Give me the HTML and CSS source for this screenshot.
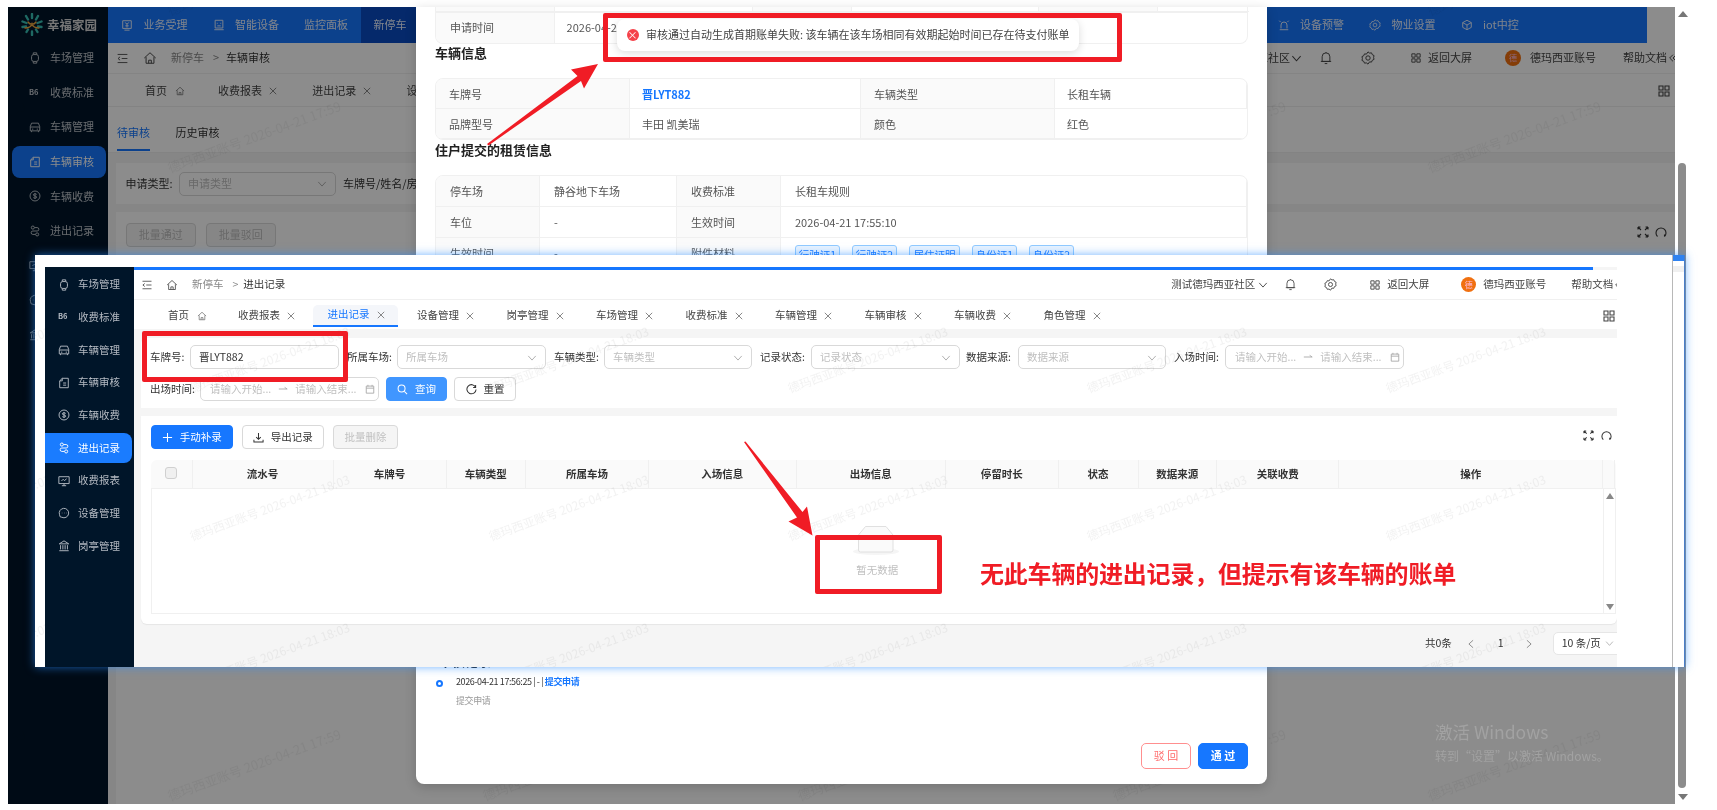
FILE: index.html
```html
<!DOCTYPE html>
<html lang="zh-CN">
<head>
<meta charset="utf-8">
<title>进出记录</title>
<link rel="stylesheet" href="styles.css">
</head>
<body>
<svg class="defs" width="0" height="0" aria-hidden="true">
  <symbol id="i-fold" viewBox="0 0 16 16"><path d="M2 3h12M7 8h7M2 13h12M5 6 2.5 8 5 10"/></symbol>
  <symbol id="i-home" viewBox="0 0 16 16"><path d="M1.5 8 8 2l6.500 6M3.500 7v7h9V7M6.500 14v-3.500h3V14"/></symbol>
  <symbol id="i-x" viewBox="0 0 10 10"><path d="m1 1 8 8M9 1 1 9"/></symbol>
  <symbol id="i-chev" viewBox="0 0 12 12"><path d="m1.500 3.500 4.500 5 4.500-5"/></symbol>
  <symbol id="i-bell" viewBox="0 0 14 16"><path d="M2.500 12V6.500a4.500 4.500 0 0 1 9 0V12zM1 12h12M5.500 14.500h3M7 2V1"/></symbol>
  <symbol id="i-gear" viewBox="0 0 16 16"><path d="m8 1 1.800 1.400 2.200-.3.900 2.100 2 1-.5 2.200.5 2.200-2 1-.9 2.100-2.200-.3L8 15l-1.800-1.400-2.200.3-.9-2.100-2-1 .5-2.200-.5-2.200 2-1 .9-2.100 2.200.3z"/><circle cx="8" cy="8" r="2.500"/></symbol>
  <symbol id="i-grid" viewBox="0 0 12 12"><path d="M1 1h4v4H1zM7 1h4v4H7zM1 7h4v4H1zM7 7h4v4H7z"/></symbol>
  <symbol id="i-expand" viewBox="0 0 12 12"><path d="M1 1l3 3M1 1v2.500M1 1h2.500M11 1 8 4M11 1v2.500M11 1H8.500M1 11l3-3M1 11V8.500M1 11h2.500M11 11 8 8M11 11V8.500M11 11H8.500"/></symbol>
  <symbol id="i-reload" viewBox="0 0 12 12"><path d="M2.500 10.500A5 5 0 1 1 9.500 10.500M9.500 10.500V8.500"/></symbol>
  <symbol id="i-search" viewBox="0 0 12 12"><circle cx="5" cy="5" r="3.800"/><path d="m8 8 3 3"/></symbol>
  <symbol id="i-redo" viewBox="0 0 12 12"><path d="M10.500 3.500A5 5 0 1 0 11 6M10.500 1v2.800H7.800"/></symbol>
  <symbol id="i-plus" viewBox="0 0 12 12"><path d="M6 1v10M1 6h10"/></symbol>
  <symbol id="i-down" viewBox="0 0 12 12"><path d="M6 1v7M3.500 5.500 6 8l2.500-2.500M1 8.500V11h10V8.500"/></symbol>
  <symbol id="i-cal" viewBox="0 0 12 12"><path d="M1.500 2.500h9v8.500h-9zM1.500 5h9M3.500 1v2M8.500 1v2"/></symbol>
  <symbol id="i-arrow" viewBox="0 0 12 8"><path d="M1 4h10M8 2l3 2"/></symbol>
  <symbol id="i-watch" viewBox="0 0 12 14"><rect x="2" y="3" width="8" height="8" rx="2.500"/><path d="M4 3V1h4v2M4 11v2h4v-2"/></symbol>
  <symbol id="i-car" viewBox="0 0 14 14"><path d="M3 2.500h8l1.500 4v5h-11v-5zM1.500 7h11M3.500 9.500h1.500M9 9.500h1.500M3 11.500v1.500M11 11.500v1.500"/></symbol>
  <symbol id="i-doc" viewBox="0 0 14 14"><path d="M5 1.500h7v11H2v-8zM5 1.500v3H2M6 7h3.500M6 9.500h3.500"/></symbol>
  <symbol id="i-coin" viewBox="0 0 14 14"><circle cx="7" cy="7" r="5.800"/><path d="M9 5.200C8.500 4.200 5 4 5 5.700 5 7.400 9 6.500 9 8.300 9 10 5.500 9.800 5 8.800M7 3.500v7"/></symbol>
  <symbol id="i-route" viewBox="0 0 14 14"><circle cx="4.500" cy="3" r="1.800"/><circle cx="9.500" cy="11" r="1.800"/><path d="M6.500 3h3a2 2 0 0 1 0 4h-5a2 2 0 0 0 0 4h3"/></symbol>
  <symbol id="i-screen" viewBox="0 0 14 14"><path d="M1 2h12v8H1zM4.500 12.500h5M7 10v2.500M4 7l2-2 1.500 1.500L10 4.500"/></symbol>
  <symbol id="i-clock" viewBox="0 0 14 14"><path d="M2.500 11.500 1.800 9A5.500 5.500 0 1 1 4.500 12z"/><path d="M4.500 7h.5M7 7h.5M9.500 7h.5"/></symbol>
  <symbol id="i-bank" viewBox="0 0 14 14"><path d="M7 1 1.500 4.500h11zM3 6v5M5.700 6v5M8.300 6v5M11 6v5M1.500 12.500h11"/></symbol>
  <symbol id="i-tv" viewBox="0 0 14 14"><path d="M2 2h10v9H2zM4 13h6M5 4l1 1.500h2L9 4M5 8h4M7 5.500V10"/></symbol>
  <symbol id="i-face" viewBox="0 0 14 14"><path d="M2.500 1.500h9v9h-9zM1.500 12.500h11M5 4.500v1M9 4.500v1M5 8h4"/></symbol>
  <symbol id="i-alarm" viewBox="0 0 14 14"><path d="M3.500 11V7a3.500 3.500 0 0 1 7 0v4M2 12.500h10M1.500 2l1.500 1.500M12.500 2 11 3.500"/></symbol>
  <symbol id="i-cube" viewBox="0 0 14 14"><path d="M7 1.500 12 4.200v5.600L7 12.500 2 9.800V4.200zM2 4.200 7 7l5-2.800M7 7v5.500"/></symbol>
  <symbol id="i-more" viewBox="0 0 12 12"><path d="M6 2 2 6l4 4M10 2 6 6l4 4"/></symbol>
</svg>

<main class="canvas">

  <section class="base">
    <aside class="side">
      <div class="logo">
        <svg class="logo-mark" viewBox="0 0 22 23"><path class="logo-teal" d="M11 1v4M5 3l2 3.500M17 3l-2 3.500M1.500 8.500 5.500 10M20.500 8.500 16.500 10M1.500 14l3.500-.5M20.500 14l-3.500-.5M11 18.500V22M5.500 19l1.500-2.500M16.500 19 15 16.500"/><path class="logo-orange" d="M7 9c2 3 6 3 8 0M4 15c3 0 6-1 7-4 1 3 4 4 7 4"/></svg>
        <span>幸福家园</span>
      </div>
      <a class="side-item"><svg class="ic"><use href="#i-watch"/></svg>车场管理</a>
      <a class="side-item"><b class="b6">B6</b>收费标准</a>
      <a class="side-item"><svg class="ic"><use href="#i-car"/></svg>车辆管理</a>
      <a class="side-item is-on"><svg class="ic"><use href="#i-doc"/></svg>车辆审核</a>
      <a class="side-item"><svg class="ic"><use href="#i-coin"/></svg>车辆收费</a>
      <a class="side-item"><svg class="ic"><use href="#i-route"/></svg>进出记录</a>
      <a class="side-item"><svg class="ic"><use href="#i-screen"/></svg>收费报表</a>
      <a class="side-item"><svg class="ic"><use href="#i-clock"/></svg>设备管理</a>
      <a class="side-item"><svg class="ic"><use href="#i-bank"/></svg>岗亭管理</a>
    </aside>
    <div class="main">
      <nav class="topnav">
        <a class="nav-item"><svg class="ic"><use href="#i-tv"/></svg>业务受理</a>
        <a class="nav-item"><svg class="ic"><use href="#i-face"/></svg>智能设备</a>
        <a class="nav-item">监控面板</a>
        <a class="nav-item is-on">新停车</a>
        <a class="nav-item nav-far"><svg class="ic"><use href="#i-alarm"/></svg>设备预警</a>
        <a class="nav-item"><svg class="ic"><use href="#i-gear"/></svg>物业设置</a>
        <a class="nav-item"><svg class="ic"><use href="#i-cube"/></svg>iot中控</a>
      </nav>
      <header class="hd">
        <svg class="ic hd-fold"><use href="#i-fold"/></svg>
        <svg class="ic hd-home"><use href="#i-home"/></svg>
        <span class="crumb">新停车</span><span class="crumb-sep">&gt;</span><span class="crumb-now">车辆审核</span>
        <span class="hd-org">测试德玛西亚社区</span>
        <svg class="ic hd-chev"><use href="#i-chev"/></svg>
        <svg class="ic hd-bell"><use href="#i-bell"/></svg>
        <svg class="ic hd-gear"><use href="#i-gear"/></svg>
        <svg class="ic hd-grid"><use href="#i-grid"/></svg>
        <span class="hd-back">返回大屏</span>
        <span class="hd-avatar">德</span>
        <span class="hd-user">德玛西亚账号</span>
        <span class="hd-help">帮助文档</span>
        <svg class="ic hd-more"><use href="#i-more"/></svg>
      </header>
      <div class="tabs">
        <a class="tab tab-first">首页<svg class="ic tab-ic"><use href="#i-home"/></svg></a>
        <a class="tab">收费报表<svg class="ic tab-x"><use href="#i-x"/></svg></a>
        <a class="tab">进出记录<svg class="ic tab-x"><use href="#i-x"/></svg></a>
        <a class="tab">设备管理<svg class="ic tab-x"><use href="#i-x"/></svg></a>
        <svg class="ic tabs-grid"><use href="#i-grid"/></svg>
      </div>
      <div class="audit">
        <div class="audit-tabs"><a class="audit-tab is-on">待审核</a><a class="audit-tab">历史审核</a></div>
        <div class="audit-filter">
          <label class="lbl lbl-apply">申请类型:</label>
          <span class="field field-apply">申请类型<svg class="ic field-chev"><use href="#i-chev"/></svg></span>
          <label class="lbl lbl-plate">车牌号/姓名/房号:</label>
        </div>
        <div class="audit-card">
          <div class="audit-btns"><button class="btn btn-off">批量通过</button><button class="btn btn-off">批量驳回</button><span class="tools"><svg class="ic"><use href="#i-expand"/></svg><svg class="ic"><use href="#i-reload"/></svg></span></div>
        </div>
      </div>
    </div>
    <svg class="wm" aria-hidden="true"><defs><pattern id="wm-a" width="315" height="157" patternUnits="userSpaceOnUse" patternTransform="translate(152 56)"><text x="10" y="110" transform="rotate(-20 10 110)" class="wm-text wm-a">德玛西亚账号 2026-04-21 17:59</text></pattern></defs><rect width="100%" height="100%" fill="url(#wm-a)"/></svg>
    <div class="mask"></div>
  </section>

  <section class="modal">
    <div class="dt dt-1 dt-frag"><i class="c k"></i><i class="c"></i><i class="c k"></i><i class="c"></i><i class="c k"></i><i class="c"></i></div>
    <div class="dt dt-wide dt-end"><div class="c k">申请时间</div><div class="c c-val">2026-04-2</div></div>
    <h3 class="sec sec-1">车辆信息</h3>
    <div class="dt dt-2 dt-box">
      <div class="c k">车牌号</div><div class="c c-val plate">晋LYT882</div><div class="c k">车辆类型</div><div class="c c-val">长租车辆</div>
      <div class="c k">品牌型号</div><div class="c c-val">丰田 凯美瑞</div><div class="c k">颜色</div><div class="c c-val">红色</div>
    </div>
    <h3 class="sec sec-2">住户提交的租赁信息</h3>
    <div class="dt dt-3 dt-box">
      <div class="c k">停车场</div><div class="c">静谷地下车场</div><div class="c k">收费标准</div><div class="c">长租车规则</div>
      <div class="c k">车位</div><div class="c">-</div><div class="c k">生效时间</div><div class="c">2026-04-21 17:55:10</div>
      <div class="c k">生效时间</div><div class="c">-</div><div class="c k">附件材料</div><div class="c c-tags"><span class="att">行驶证1</span><span class="att">行驶证2</span><span class="att att-w">居住证明</span><span class="att">身份证1</span><span class="att">身份证2</span></div>
    </div>
    <h3 class="tl-head">审核记录</h3>
    <div class="tl">
      <span class="tl-dot"></span>
      <div class="tl-body">
        <p class="tl-line">2026-04-21 17:56:25 | - | <a class="tl-link">提交申请</a></p>
        <p class="tl-note">提交申请</p>
      </div>
    </div>
    <div class="modal-foot"><button class="mbtn mbtn-no">驳 回</button><button class="mbtn mbtn-ok">通 过</button></div>
  </section>

  <div class="sbar"><span class="sbar-up"></span><span class="sbar-thumb"></span><span class="sbar-down"></span></div>

  <div class="winmark"><p class="winmark-a">激活 Windows</p><p class="winmark-b">转到“设置”以激活 Windows。</p></div>

  <div class="toast"><span class="toast-ic">×</span>审核通过自动生成首期账单失败: 该车辆在该车场相同有效期起始时间已存在待支付账单</div>

  <section class="shot">
    <aside class="s-side">
      <a class="s-item"><svg class="ic"><use href="#i-watch"/></svg>车场管理</a>
      <a class="s-item"><b class="b6">B6</b>收费标准</a>
      <a class="s-item"><svg class="ic"><use href="#i-car"/></svg>车辆管理</a>
      <a class="s-item"><svg class="ic"><use href="#i-doc"/></svg>车辆审核</a>
      <a class="s-item"><svg class="ic"><use href="#i-coin"/></svg>车辆收费</a>
      <a class="s-item is-on"><svg class="ic"><use href="#i-route"/></svg>进出记录</a>
      <a class="s-item"><svg class="ic"><use href="#i-screen"/></svg>收费报表</a>
      <a class="s-item"><svg class="ic"><use href="#i-clock"/></svg>设备管理</a>
      <a class="s-item"><svg class="ic"><use href="#i-bank"/></svg>岗亭管理</a>
    </aside>
    <div class="s-main">
      <div class="s-line"></div>
      <header class="hd s-hd">
        <svg class="ic hd-fold"><use href="#i-fold"/></svg>
        <svg class="ic hd-home"><use href="#i-home"/></svg>
        <span class="crumb">新停车</span><span class="crumb-sep">&gt;</span><span class="crumb-now">进出记录</span>
        <span class="hd-org">测试德玛西亚社区</span>
        <svg class="ic hd-chev"><use href="#i-chev"/></svg>
        <svg class="ic hd-bell"><use href="#i-bell"/></svg>
        <svg class="ic hd-gear"><use href="#i-gear"/></svg>
        <svg class="ic hd-grid"><use href="#i-grid"/></svg>
        <span class="hd-back">返回大屏</span>
        <span class="hd-avatar">德</span>
        <span class="hd-user">德玛西亚账号</span>
        <span class="hd-help">帮助文档</span>
        <svg class="ic hd-more"><use href="#i-more"/></svg>
      </header>
      <div class="tabs s-tabs">
        <a class="tab tab-first">首页<svg class="ic tab-ic"><use href="#i-home"/></svg></a>
        <a class="tab">收费报表<svg class="ic tab-x"><use href="#i-x"/></svg></a>
        <a class="tab is-on">进出记录<svg class="ic tab-x"><use href="#i-x"/></svg></a>
        <a class="tab">设备管理<svg class="ic tab-x"><use href="#i-x"/></svg></a>
        <a class="tab">岗亭管理<svg class="ic tab-x"><use href="#i-x"/></svg></a>
        <a class="tab">车场管理<svg class="ic tab-x"><use href="#i-x"/></svg></a>
        <a class="tab">收费标准<svg class="ic tab-x"><use href="#i-x"/></svg></a>
        <a class="tab">车辆管理<svg class="ic tab-x"><use href="#i-x"/></svg></a>
        <a class="tab">车辆审核<svg class="ic tab-x"><use href="#i-x"/></svg></a>
        <a class="tab">车辆收费<svg class="ic tab-x"><use href="#i-x"/></svg></a>
        <a class="tab">角色管理<svg class="ic tab-x"><use href="#i-x"/></svg></a>
        <svg class="ic tabs-grid"><use href="#i-grid"/></svg>
      </div>
      <form class="filter">
        <div class="f-row">
          <label class="lbl l40">车牌号:</label><span class="field f149 is-val">晋LYT882</span>
          <label class="lbl l50 m8">所属车场:</label><span class="field f149">所属车场<svg class="ic field-chev"><use href="#i-chev"/></svg></span>
          <label class="lbl l50 m8">车辆类型:</label><span class="field f148">车辆类型<svg class="ic field-chev"><use href="#i-chev"/></svg></span>
          <label class="lbl l51 m8">记录状态:</label><span class="field f149">记录状态<svg class="ic field-chev"><use href="#i-chev"/></svg></span>
          <label class="lbl l52 m6">数据来源:</label><span class="field f148">数据来源<svg class="ic field-chev"><use href="#i-chev"/></svg></span>
          <label class="lbl l51 m8">入场时间:</label>
          <span class="field range f178"><span>请输入开始...</span><svg class="ic range-to"><use href="#i-arrow"/></svg><span>请输入结束...</span><svg class="ic range-cal"><use href="#i-cal"/></svg></span>
        </div>
        <div class="f-row">
          <label class="lbl l50">出场时间:</label>
          <span class="field range f179"><span>请输入开始...</span><svg class="ic range-to"><use href="#i-arrow"/></svg><span>请输入结束...</span><svg class="ic range-cal"><use href="#i-cal"/></svg></span>
          <button type="button" class="btn btn-pri btn-q"><svg class="ic"><use href="#i-search"/></svg>查询</button>
          <button type="button" class="btn btn-line btn-r"><svg class="ic"><use href="#i-redo"/></svg>重置</button>
        </div>
      </form>
      <div class="card">
        <div class="toolbar">
          <button class="btn btn-solid btn-add"><svg class="ic"><use href="#i-plus"/></svg>手动补录</button>
          <button class="btn btn-line btn-exp"><svg class="ic"><use href="#i-down"/></svg>导出记录</button>
          <button class="btn btn-dis btn-del">批量删除</button>
          <span class="tools"><svg class="ic"><use href="#i-expand"/></svg><svg class="ic"><use href="#i-reload"/></svg></span>
        </div>
        <div class="table">
          <div class="thead">
            <div class="th"><span class="check"></span></div>
            <div class="th">流水号</div><div class="th">车牌号</div><div class="th">车辆类型</div><div class="th">所属车场</div><div class="th">入场信息</div><div class="th">出场信息</div><div class="th">停留时长</div><div class="th">状态</div><div class="th">数据来源</div><div class="th">关联收费</div><div class="th">操作</div><div class="th"></div>
          </div>
          <div class="tbody">
            <div class="empty">
              <svg class="empty-ic" viewBox="0 0 48 29"><ellipse cx="23" cy="25.500" rx="23" ry="3.500" class="e-shadow"/><path d="M5.500 9 12.500.5H33L40 9v15a2 2 0 0 1-2 2H7.500a2 2 0 0 1-2-2z" class="e-box"/></svg>
              <span>暂无数据</span>
            </div>
            <div class="t-scroll"><span class="t-up"></span><span class="t-down"></span></div>
          </div>
        </div>
      </div>
      <div class="pager">
        <span class="pg-total">共0条</span>
        <svg class="ic pg-prev"><use href="#i-chev"/></svg>
        <span class="pg-num">1</span>
        <svg class="ic pg-next"><use href="#i-chev"/></svg>
        <span class="pg-size">10 条/页<svg class="ic"><use href="#i-chev"/></svg></span>
      </div>
    </div>
    <div class="s-edge"><span class="s-edge-top"></span></div>
    <svg class="wm" aria-hidden="true"><defs><pattern id="wm-b" width="299" height="148" patternUnits="userSpaceOnUse" patternTransform="translate(147 38)"><text x="10" y="100" transform="rotate(-20 10 100)" class="wm-text wm-b">德玛西亚账号 2026-04-21 18:03</text></pattern></defs><rect width="100%" height="100%" fill="url(#wm-b)"/></svg>
  </section>

  <svg class="marks" viewBox="0 0 1717 810" aria-hidden="true">
    <polygon points="598,64 571,69.500 577.500,76 487,144 488.500,145.500 581,81 584,88.500"/>
    <polygon points="812.500,535.500 788.500,521.500 797,517.500 744,442 745.500,441.500 802.500,512 807,506.500"/>
  </svg>
  <div class="rbox rbox-toast"></div>
  <div class="rbox rbox-plate"></div>
  <div class="rbox rbox-empty"></div>
  <p class="note">无此车辆的进出记录&#xFF0C;但提示有该车辆的账单</p>
</main>
</body>
</html>
```

FILE: styles.css
```css
* { box-sizing: border-box; }
html, body { margin: 0; padding: 0; background: #fff; }
body { width: 1717px; height: 810px; overflow: hidden; font: 11px/1.4 "Noto Sans CJK SC", "Noto Sans", sans-serif; color: #333; }
p, h3 { margin: 0; }
a { color: inherit; text-decoration: none; }
button { font: inherit; padding: 0; }
.defs { position: absolute; }
.ic { width: 12px; height: 12px; flex: none; fill: none; stroke: currentColor; stroke-width: 1.1; }
.canvas { position: relative; width: 1717px; height: 810px; overflow: hidden; filter: blur(.3px); }

/* ---- background application window ---- */
.base { position: absolute; left: 8px; top: 7px; width: 1667px; height: 797px; display: flex; overflow: hidden; background: #fff; }
.mask { position: absolute; inset: 0; background: rgba(0,0,0,.45); }
.wm { position: absolute; inset: 0; width: 100%; height: 100%; pointer-events: none; }
.wm-text { font-family: "Noto Sans CJK SC", sans-serif; fill: rgba(0,0,0,.05); }
.wm-a { font-size: 13px; }
.wm-b { font-size: 12px; }

.side { width: 100px; flex: none; background: #001529; color: #bcc2c8; }
.logo { height: 35px; display: flex; align-items: center; gap: 4px; padding-left: 13px; font-size: 12.500px; font-weight: 700; color: #d8d8d8; }
.logo-mark { width: 22px; height: 23px; fill: none; stroke-linecap: round; }
.logo-teal { stroke: #38c0b4; stroke-width: 2.400; }
.logo-orange { stroke: #f0aa40; stroke-width: 1.400; }
.side-item { display: flex; align-items: center; gap: 9px; height: 32px; margin: 0 2px 2.600px 4px; padding-left: 17px; border-radius: 8px; }
.side-item.is-on { background: #1677ff; color: #fff; }
.b6 { width: 12px; flex: none; font-size: 7.500px; font-weight: 700; }

.main { width: 1567px; flex: none; background: #fff; }
.topnav { width: 1539px; height: 36px; display: flex; align-items: center; background: #1677ff; color: #e8f0ff; padding-left: 13px; }
.nav-item { display: flex; align-items: center; gap: 10.500px; height: 36px; margin-right: 25px; }
.nav-item.is-on { background: #0a4cc4; padding: 0 10px 0 13px; margin-right: 0; margin-left: -12.500px; }
.nav-far { margin-left: 861px; }
.nav-far ~ .nav-item { margin-right: 25px; }

.hd { height: 31px; display: flex; align-items: center; overflow: hidden; white-space: nowrap; border-bottom: 1px solid #f0f0f0; color: #444; padding-left: 7.500px; }
.hd-fold { width: 13px; height: 13px; }
.hd-home { width: 14px; height: 14px; margin-left: 14px; }
.crumb { margin-left: 14.500px; color: #888; }
.crumb-sep { margin-left: 9px; color: #888; }
.crumb-now { margin-left: 7px; color: #333; }
.hd-org { margin-left: 932px; }
.hd-chev { width: 11px; height: 11px; margin-left: 1px; }
.hd-bell { width: 12px; height: 14px; margin-left: 18px; }
.hd-gear { width: 14px; height: 14px; margin-left: 29px; }
.hd-grid { width: 10px; height: 10px; margin-left: 36px; }
.hd-back { margin-left: 7px; }
.hd-avatar { width: 16px; height: 16px; margin-left: 33px; border-radius: 50%; background: #f07010; color: #fbd; font-size: 8px; line-height: 16px; text-align: center; flex: none; }
.hd-user { margin-left: 9px; }
.hd-help { margin-left: 27px; }
.hd-more { width: 10px; height: 10px; margin-left: 1px; }

.tabs { height: 33px; display: flex; align-items: center; color: #444; padding: 1px 5px 0 22px; white-space: nowrap; border-bottom: 1px solid #eee; background: #fff; }
.tab { display: flex; align-items: center; gap: 6px; width: 94.300px; height: 24px; padding-left: 15px; flex: none; }
.tab-first { width: 73px; }
.tab-ic { width: 10px; height: 10px; margin-left: 2px; color: #666; }
.tab-x { width: 8px; height: 8px; color: #777; margin-left: 1px; }
.tabs-grid { margin-left: auto; }
.base .tabs-grid { margin-right: 0; }

.audit { background: #f5f5f5; height: 700px; }
.audit-tabs { height: 46px; display: flex; align-items: flex-start; background: #fff; padding-left: 9px; border-bottom: 1px solid #eee; }
.audit-tab { margin-right: 25.500px; height: 44px; padding-top: 18px; }
.audit-tab.is-on { color: #1677ff; border-bottom: 2px solid #1677ff; }
.audit-filter { margin: 10px 0 8px 8px; height: 41px; background: #fff; display: flex; align-items: center; padding-left: 9.500px; white-space: nowrap; }
.lbl-apply { width: 53.500px; flex: none; }
.field-apply { width: 157px; margin-right: 7px; }
.audit-card { margin-left: 8px; height: 600px; background: #fff; padding: 10.500px 0 0 10px; }
.audit-btns { display: flex; align-items: center; gap: 10.500px; padding-right: 8px; }
.btn-off { width: 69.500px; height: 25px; border: 1px solid #d9d9d9; border-radius: 5px; background: #f5f5f5; color: #bbb; }
.tools { margin-left: auto; display: flex; align-items: center; gap: 6px; color: #333; }
.audit-btns .tools { gap: 6px; margin-top: -5px; }

/* ---- modal ---- */
.modal { position: absolute; left: 416px; top: 7px; width: 851px; height: 777px; background: #fff; border-radius: 0 0 8px 8px; padding: 0 19.400px 0 19px; color: #555; box-shadow: 0 3px 12px rgba(0,0,0,.18); }
.dt { display: grid; }
.dt .c { display: flex; align-items: center; padding-left: 14px; border-right: 1px solid #f0f0f0; border-bottom: 1px solid #f0f0f0; min-height: 0; }
.dt .c:nth-last-child(1) { border-right: 0; }
.dt .k { background: #fafafa; color: #555; }
.dt .c-val { padding-left: 12px; }
.dt-frag { height: 6px; border: 1px solid #f0f0f0; border-top: 0; grid-template-columns: 118.600px 198.400px 99px 187px 118.700px 90.900px; }
.dt-wide { height: 30.500px; grid-template-columns: 118.600px 1fr; border: 1px solid #f0f0f0; border-top: 0; border-radius: 0 0 8px 8px; overflow: hidden; }
.dt-wide .c { border-bottom: 0; }
.sec { font-size: 13px; font-weight: 700; color: #222; line-height: 18px; }
.sec-1 { margin-top: .5px; margin-bottom: 15.500px; }
.sec-2 { margin-top: 1.500px; margin-bottom: 16px; }
.dt-box { border: 1px solid #f0f0f0; border-radius: 8px; overflow: hidden; }
.dt-2 { height: 62px; grid-template-columns: 194px 231px 194px 1fr; grid-auto-rows: 1fr; }
.dt-2 .c { padding-top: 3px; }
.dt-2 .c:not(.c-val) { padding-left: 13px; }
.dt-3 { height: 111px; grid-template-columns: 104px 137px 104px 1fr; grid-auto-rows: 31px; }
.dt-3 .c { padding-top: 2px; }
.dt .plate { color: #1677ff; font-weight: 700; }
.c-tags { gap: 12px; }
.att { width: 45px; height: 19px; line-height: 17px; font-size: 10.500px; text-align: center; color: #1677ff; background: #e8f3ff; border: 1px solid #91caff; border-radius: 3px; }
.att-w { width: 51px; }
.tl-head { position: absolute; left: 23px; top: 645px; font-size: 13px; line-height: 18px; color: #222; }
.tl { position: absolute; left: 19px; top: 668px; display: flex; }
.tl-dot { width: 7px; height: 7px; margin: 5px 13px 0 1px; border: 2px solid #1677ff; border-radius: 50%; flex: none; }
.tl-line { font-size: 9px; letter-spacing: -.4px; color: #333; line-height: 14px; }
.tl-link { color: #1677ff; font-weight: 700; }
.tl-note { font-size: 9px; letter-spacing: -.4px; color: #999; margin-top: 6px; }
.modal-foot { position: absolute; right: 19px; top: 736px; display: flex; gap: 7px; }
.mbtn { width: 50px; height: 26px; border-radius: 5px; background: #fff; }
.mbtn-no { border: 1px solid #ff8f8f; color: #ff6b6b; }
.mbtn-ok { border: 1px solid #1677ff; background: #1677ff; color: #fff; font-weight: 700; }

.sbar { position: absolute; left: 1675px; top: 7px; width: 16px; height: 797px; }
.sbar-up, .sbar-down { position: absolute; left: 3px; width: 0; height: 0; border: 5px solid transparent; border-top-width: 0; border-bottom: 6px solid #777; }
.sbar-up { top: 4px; }
.sbar-down { bottom: 4px; border-bottom-width: 0; border-top: 6px solid #777; }
.sbar-thumb { position: absolute; left: 3px; top: 156px; width: 7.500px; height: 625px; border-radius: 4px; background: #8c8c8c; }

.winmark { position: absolute; left: 1435px; top: 720px; color: #a2a2a2; }
.winmark-a { font-size: 17.500px; line-height: 24px; }
.winmark-b { font-size: 12px; margin-top: 3px; line-height: 17px; }

.toast { position: absolute; left: 617px; top: 19px; width: 462px; height: 32px; display: flex; align-items: center; padding-left: 29px; background: #fff; border-radius: 8px; box-shadow: 0 2px 8px rgba(0,0,0,.14); color: #444; font-size: 11px; white-space: nowrap; }
.toast-ic { position: absolute; left: 9.500px; top: 10px; width: 12px; height: 12px; border-radius: 50%; background: #f5424a; color: #fff; font-size: 10px; line-height: 12px; text-align: center; }

/* ---- pasted foreground screenshot ---- */
.shot { position: absolute; left: 35px; top: 255px; width: 1650px; height: 412px; display: flex; padding: 12px 0 0 10px; background: #fff; box-shadow: 0 0 9px rgba(40,140,255,.65); font-size: 10.500px; overflow: hidden; }
.s-side { width: 88.500px; flex: none; background: #001529; color: #b4bac2; padding-top: 2.500px; }
.s-item { display: flex; align-items: center; gap: 8px; height: 30px; margin: 0 2px 2.700px 0; padding-left: 13px; border-radius: 0 8px 8px 0; }
.s-item .ic, .s-item .b6 { width: 12px; height: 12px; }
.s-item.is-on { background: #1a7cff; color: #fff; }
.s-main { width: 1483px; flex: none; background: #f5f5f5; overflow: hidden; }
.s-line { height: 2.500px; width: 1459.500px; background: #1677ff; }
.s-hd { height: 30.500px; background: #fff; padding: 1px 0 0 7.500px; }
.s-hd .hd-fold { width: 12px; height: 12px; }
.s-hd .hd-home { width: 12px; height: 12px; margin-left: 13px; }
.s-hd .crumb { margin-left: 14px; }
.s-hd .crumb-sep { margin-left: 9px; }
.s-hd .crumb-now { margin-left: 5px; }
.s-hd .hd-org { margin-left: 886px; }
.s-hd .hd-chev { width: 10px; height: 10px; margin-left: 3px; }
.s-hd .hd-bell { width: 11px; height: 13px; margin-left: 17px; }
.s-hd .hd-gear { width: 13px; height: 13px; margin-left: 28px; }
.s-hd .hd-grid { width: 10px; height: 10px; margin-left: 33px; }
.s-hd .hd-back { margin-left: 7px; }
.s-hd .hd-avatar { width: 15px; height: 15px; line-height: 15px; margin-left: 32px; }
.s-hd .hd-user { margin-left: 7px; }
.s-hd .hd-help { margin-left: 25px; }
.s-tabs { height: 29px; padding: 2px 2px 0 19.500px; border: 0; }
.s-tabs .tab { width: 85px; height: 22px; margin-right: 4.500px; }
.s-tabs .tab-first { width: 65.500px; }
.s-tabs .tab.is-on { color: #1677ff; background: #f4f6fa; border-bottom: 2px solid #1677ff; border-radius: 5px 5px 0 0; }

.filter { margin: 9px 0 8px 7.500px; height: 70px; background: #fff; border-radius: 6px 0 0 0; padding: 7px 0 0 9px; }
.f-row { display: flex; align-items: center; height: 24px; margin-bottom: 8px; white-space: nowrap; }
.lbl { flex: none; color: #333; }
.l40 { width: 40px; } .l50 { width: 50px; } .l51 { width: 51px; } .l52 { width: 52px; }
.m8 { margin-left: 8px; } .m6 { margin-left: 6px; }
.field { position: relative; display: flex; align-items: center; height: 24px; flex: none; padding-left: 8px; border: 1px solid #d9d9d9; border-radius: 5px; background: transparent; color: #bfbfbf; }
.is-val { color: #333; }
.field-chev { position: absolute; right: 8px; top: 6.500px; width: 10px; height: 10px; color: #aaa; }
.f149 { width: 149px; } .f148 { width: 148px; } .f178 { width: 178.500px; } .f179 { width: 179px; }
.range { gap: 7px; padding-left: 9px; }
.range-to { width: 10px; height: 8px; color: #aaa; }
.range-cal { width: 10px; height: 10px; color: #aaa; margin-left: 1px; }
.btn { display: inline-flex; align-items: center; justify-content: center; gap: 7px; height: 24px; border-radius: 4px; flex: none; }
.btn .ic { width: 11px; height: 11px; }
.btn-pri { background: #4096ff; border: 1px solid #4096ff; color: #fff; }
.btn-q { width: 61px; margin-left: 7px; }
.btn-line { background: #fff; border: 1px solid #d9d9d9; color: #333; }
.btn-r { width: 62px; margin-left: 7px; }

.card { margin-left: 7.500px; height: 208px; background: #fff; border-radius: 0 0 6px 6px; padding: 9px 1px 0 10px; box-shadow: 0 1px 1px #e6e6e6; }
.toolbar { display: flex; align-items: center; height: 24px; margin-bottom: 11px; }
.btn-solid { background: #1677ff; border: 1px solid #1677ff; color: #fff; }
.btn-add { width: 81.500px; }
.btn-exp { width: 81.500px; margin-left: 9.500px; }
.btn-dis { background: #f5f5f5; border: 1px solid #d9d9d9; color: #c0c0c0; }
.btn-del { width: 65px; margin-left: 9.500px; }
.toolbar .tools { gap: 7px; margin: -4px 4px 0 auto; }
.toolbar .tools .ic { width: 11px; height: 11px; }

.thead { display: grid; grid-template-columns: 41.500px 141px 113px 79.500px 123px 147.500px 149.500px 112.600px 80px 78.400px 122.500px 263.500px 12px; height: 29px; background: #fafafa; border-bottom: 1px solid #f0f0f0; border-radius: 6px 6px 0 0; }
.th { display: flex; align-items: center; justify-content: center; font-weight: 700; color: #333; border-right: 1px solid #f0f0f0; padding-top: 1px; }
.check { width: 12px; height: 12px; border: 1px solid #d0d0d0; border-radius: 3px; background: #f0f0f0; margin-top: -3px; }
.tbody { position: relative; height: 125px; border: 1px solid #f0f0f0; border-top: 0; display: flex; justify-content: center; padding: 37px 12px 0 0; }
.empty { display: flex; flex-direction: column; align-items: center; gap: 8px; color: #c0c0c0; font-size: 10.500px; }
.empty-ic { width: 48px; height: 29px; }
.e-shadow { fill: #f5f5f5; }
.e-box { fill: #fafafa; stroke: #e0e0e0; stroke-width: 1; }
.t-scroll { position: absolute; right: 0; top: 0; bottom: 0; width: 12px; border-left: 1px solid #f0f0f0; background: #fff; }
.t-up, .t-down { position: absolute; left: 2px; width: 0; height: 0; border: 4px solid transparent; }
.t-up { top: 4px; border-top-width: 0; border-bottom: 6px solid #888; }
.t-down { bottom: 3px; border-bottom-width: 0; border-top: 6px solid #888; }

.pager { display: flex; align-items: center; height: 23px; margin-top: 8px; padding-left: 1291.500px; color: #333; white-space: nowrap; }
.pg-prev { width: 10px; height: 10px; margin-left: 14px; transform: rotate(90deg); color: #888; }
.pg-num { margin-left: 22px; width: 8px; }
.pg-next { width: 10px; height: 10px; margin-left: 20px; transform: rotate(-90deg); color: #888; }
.pg-size { flex: none; display: flex; align-items: center; gap: 4px; width: 70px; height: 23px; margin-left: 19px; padding-left: 8px; background: #fff; border: 1px solid #e6e6e6; border-radius: 5px; }
.pg-size .ic { width: 9px; height: 9px; color: #aaa; }

.s-edge { position: absolute; left: 1636.500px; top: 0; bottom: 0; width: 13px; border-left: 1px solid #b8b8b8; border-right: 1.500px solid #4a7ec8; background: #fff; }
.s-edge-top { display: block; height: 6px; background: #2f82f0; box-shadow: 0 11px 0 0 #f0f0f0; }

/* ---- red annotations ---- */
.marks { position: absolute; inset: 0; width: 1717px; height: 810px; }
.marks polygon { fill: #f01c25; }
.rbox { position: absolute; border: 5.500px solid #f01c25; border-radius: 2px; }
.rbox-toast { left: 603px; top: 13px; width: 519px; height: 49px; }
.rbox-plate { left: 141.500px; top: 331px; width: 206px; height: 51px; }
.rbox-empty { left: 815px; top: 535px; width: 127px; height: 59px; }
.note { position: absolute; left: 980px; top: 556px; font-size: 24px; line-height: 34px; font-weight: 700; letter-spacing: -.2px; color: #f01c25; white-space: nowrap; }
```
